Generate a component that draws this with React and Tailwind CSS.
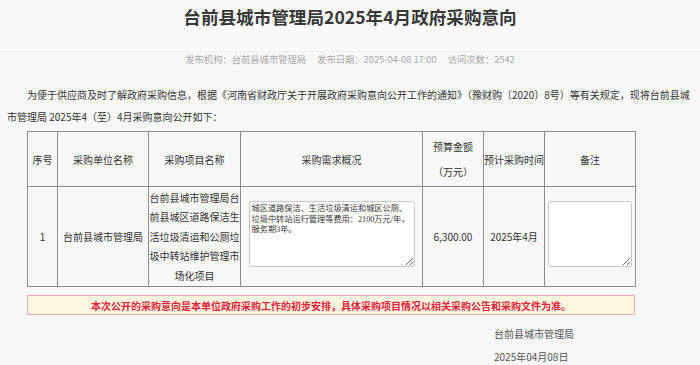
import React from "react";

const cjk = { fontFamily: '"Noto Sans CJK SC", "Noto Sans", sans-serif' };
const serif = { fontFamily: '"Liberation Serif", "Noto Sans CJK SC", serif' };

export default function App() {
  return (
    <div className="w-[700px] h-[365px] overflow-hidden bg-[#f8f8f8] text-[#333]" style={cjk}>
      {/* 标题 */}
      <div className="h-[52px] bg-[#fafafa] border-b border-[#f1f1f1] pt-[5px]">
        <h1 className="text-center text-[17.6px] leading-[24px] font-bold text-[#383838]">
          台前县城市管理局2025年4月政府采购意向
        </h1>
      </div>
      <div className="flex justify-center gap-[11px] text-[9.3px] leading-[14px] text-[#a8a8a8]">
        <span>发布机构：台前县城市管理局</span>
        <span>发布日期：2025-04-08 17:00</span>
        <span>访问次数：2542</span>
      </div>

      {/* 正文 */}
      <div className="px-[7px]">
        <p className="mt-[18px] text-[10px] leading-[21.5px] indent-[20px] text-[#333]">
          为便于供应商及时了解政府采购信息，根据《河南省财政厅关于开展政府采购意向公开工作的通知》（豫财购〔2020〕8号）等有关规定，现将台前县城市管理局 2025年4（至）4月采购意向公开如下：
        </p>

        <table className="mt-[4px] ml-[20px] w-[608px] table-fixed border-collapse text-[10px] text-[#333]">
          <colgroup>
            <col className="w-[30px]" />
            <col className="w-[91px]" />
            <col className="w-[92px]" />
            <col className="w-[182px]" />
            <col className="w-[61px]" />
            <col className="w-[61px]" />
            <col className="w-[91px]" />
          </colgroup>
          <thead>
            <tr className="h-[55px]">
              <th className="border border-[#8c8c8c] font-normal p-0">序号</th>
              <th className="border border-[#8c8c8c] font-normal p-0">采购单位名称</th>
              <th className="border border-[#8c8c8c] font-normal p-0">采购项目名称</th>
              <th className="border border-[#8c8c8c] font-normal p-0">采购需求概况</th>
              <th className="border border-[#8c8c8c] font-normal p-0 leading-[25px]">
                预算金额<br />（万元）
              </th>
              <th className="border border-[#8c8c8c] font-normal p-0 whitespace-nowrap">预计采购时间</th>
              <th className="border border-[#8c8c8c] font-normal p-0">备注</th>
            </tr>
          </thead>
          <tbody>
            <tr className="h-[100px]">
              <td className="border border-[#8c8c8c] p-0 text-center">1</td>
              <td className="border border-[#8c8c8c] p-0 text-center">台前县城市管理局</td>
              <td className="border border-[#8c8c8c] p-0 text-center leading-[19.5px]">
                台前县城市管理局台前县城区道路保洁生活垃圾清运和公厕垃圾中转站维护管理市场化项目
              </td>
              <td className="border border-[#8c8c8c] p-0 text-center">
                <textarea
                  readOnly
                  className="block mx-auto mb-[5px] w-[166px] h-[66px] bg-white border border-[#c8c8c8] rounded-[2px] p-[2px] text-[8.2px] leading-[10.5px] text-[#333] outline-none"
                  style={serif}
                  defaultValue="城区道路保洁、生活垃圾清运和城区公厕、垃圾中转站运行管理等费用：2100万元/年，服务期3年。"
                />
              </td>
              <td className="border border-[#8c8c8c] p-0 text-center">6,300.00</td>
              <td className="border border-[#8c8c8c] p-0 text-center">2025年4月</td>
              <td className="border border-[#8c8c8c] p-0 text-center">
                <textarea
                  readOnly
                  className="block mx-auto mb-[5px] w-[84px] h-[66px] bg-white border border-[#c8c8c8] rounded-[2px] p-[2px] text-[8.2px] outline-none"
                  defaultValue=""
                />
              </td>
            </tr>
          </tbody>
        </table>

        {/* 提示 */}
        <div className="mt-[8px] ml-[20px] w-[608px] h-[20px] flex items-center justify-center bg-[#fff7df] border border-[#f3a7ae] text-[10px] font-bold text-[#e0243f]">
          本次公开的采购意向是本单位政府采购工作的初步安排，具体采购项目情况以相关采购公告和采购文件为准。
        </div>

        {/* 落款 */}
        <div className="mt-[6.5px] ml-[487px] text-[10px] leading-[23px] text-[#555]">
          <p>台前县城市管理局</p>
          <p>2025年04月08日</p>
        </div>
      </div>
    </div>
  );
}
